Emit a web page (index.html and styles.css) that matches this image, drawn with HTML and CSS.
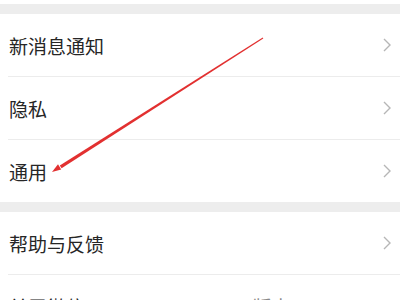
FILE: index.html
```html
<!DOCTYPE html>
<html>
<head>
<meta charset="utf-8">
<link rel="stylesheet" href="styles.css">
</head>
<body>
<div class="page">
  <div class="band band-top"></div>
  <div class="group">
    <div class="row"><span class="label">新消息通知</span><svg class="chev" viewBox="0 0 8 14"><path d="M1 1 L7 7 L1 13" /></svg></div>
    <div class="row"><span class="label">隐私</span><svg class="chev" viewBox="0 0 8 14"><path d="M1 1 L7 7 L1 13" /></svg></div>
    <div class="row"><span class="label">通用</span><svg class="chev" viewBox="0 0 8 14"><path d="M1 1 L7 7 L1 13" /></svg></div>
  </div>
  <div class="band"></div>
  <div class="group">
    <div class="row"><span class="label">帮助与反馈</span><svg class="chev" viewBox="0 0 8 14"><path d="M1 1 L7 7 L1 13" /></svg></div>
    <div class="row"><span class="label">关于微信</span><span class="value">版本 8.0</span></div>
  </div>
  <svg class="arrow" width="400" height="300" viewBox="0 0 400 300">
    <polygon points="263.3,38.4 262.7,37.6 59.8,165.6 61.6,168.2" fill="#e23030"/>
    <polygon points="52,172 61.2,169.4 58.0,164.3" fill="#e23030"/>
  </svg>
</div>
</body>
</html>
```
FILE: styles.css
```css
html, body {
  margin: 0;
  padding: 0;
  background: #ffffff;
}
.page {
  position: relative;
  width: 400px;
  height: 300px;
  overflow: hidden;
  font-family: "Noto Sans CJK SC", "Noto Sans", sans-serif;
}
.band {
  height: 10px;
  background: #ededed;
}
.band-top {
  margin-top: 4px;
}
.group {
  background: #ffffff;
}
.row {
  height: 62px;
  display: flex;
  align-items: center;
  justify-content: space-between;
  margin-left: 8px;
  padding-left: 1px;
  padding-right: 9px;
  border-bottom: 1px solid #ececec;
}
.group .row:last-child {
  border-bottom: none;
}
.label {
  font-size: 19px;
  color: #262626;
  line-height: 1;
}
.value {
  font-size: 19px;
  color: #888888;
  margin-right: 70px;
}
.chev {
  width: 8px;
  height: 14px;
  fill: none;
  stroke: #b6b6b6;
  stroke-width: 1.4;
}
.arrow {
  position: absolute;
  left: 0;
  top: 0;
}
```
